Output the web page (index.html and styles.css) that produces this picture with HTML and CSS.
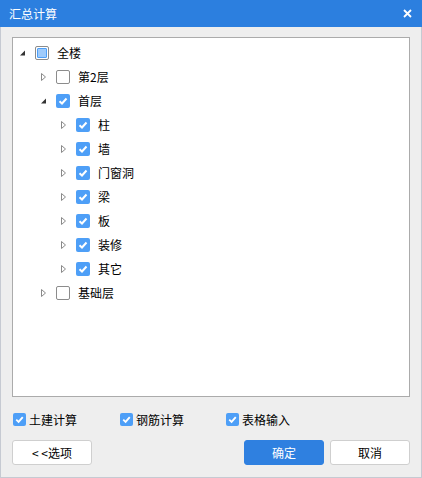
FILE: index.html
```html
<!DOCTYPE html>
<html>
<head>
<meta charset="utf-8">
<link rel="stylesheet" href="styles.css">
</head>
<body>
<div class="window">
  <div class="titlebar">
    <span class="title">汇总计算</span>
    <svg class="close" width="9" height="9" viewBox="0 0 9 9"><path d="M1 1L8 8M8 1L1 8" stroke="#fff" stroke-width="1.8"/></svg>
  </div>
  <div class="body">
    <div class="tree">
      <div class="row l0"><span class="tog"><svg width="8" height="10" viewBox="0 0 8 10"><polygon points="6,2.5 6,7.5 1,7.5" fill="#333"/></svg></span><span class="cb partial"><span></span></span><span class="lbl">全楼</span></div>
      <div class="row l1"><span class="tog"><svg width="8" height="10" viewBox="0 0 8 10"><polygon points="1.5,1.5 5.5,5 1.5,8.5" fill="#fff" stroke="#8a8a8a"/></svg></span><span class="cb"></span><span class="lbl">第2层</span></div>
      <div class="row l1"><span class="tog"><svg width="8" height="10" viewBox="0 0 8 10"><polygon points="6,2.5 6,7.5 1,7.5" fill="#333"/></svg></span><span class="cb on"><svg width="14" height="14" viewBox="0 0 14 14"><path d="M3.5 7.2L6 9.5L10.5 4.5" fill="none" stroke="#fff" stroke-width="2"/></svg></span><span class="lbl">首层</span></div>
      <div class="row l2"><span class="tog"><svg width="8" height="10" viewBox="0 0 8 10"><polygon points="1.5,1.5 5.5,5 1.5,8.5" fill="#fff" stroke="#8a8a8a"/></svg></span><span class="cb on"><svg width="14" height="14" viewBox="0 0 14 14"><path d="M3.5 7.2L6 9.5L10.5 4.5" fill="none" stroke="#fff" stroke-width="2"/></svg></span><span class="lbl">柱</span></div>
      <div class="row l2"><span class="tog"><svg width="8" height="10" viewBox="0 0 8 10"><polygon points="1.5,1.5 5.5,5 1.5,8.5" fill="#fff" stroke="#8a8a8a"/></svg></span><span class="cb on"><svg width="14" height="14" viewBox="0 0 14 14"><path d="M3.5 7.2L6 9.5L10.5 4.5" fill="none" stroke="#fff" stroke-width="2"/></svg></span><span class="lbl">墙</span></div>
      <div class="row l2"><span class="tog"><svg width="8" height="10" viewBox="0 0 8 10"><polygon points="1.5,1.5 5.5,5 1.5,8.5" fill="#fff" stroke="#8a8a8a"/></svg></span><span class="cb on"><svg width="14" height="14" viewBox="0 0 14 14"><path d="M3.5 7.2L6 9.5L10.5 4.5" fill="none" stroke="#fff" stroke-width="2"/></svg></span><span class="lbl">门窗洞</span></div>
      <div class="row l2"><span class="tog"><svg width="8" height="10" viewBox="0 0 8 10"><polygon points="1.5,1.5 5.5,5 1.5,8.5" fill="#fff" stroke="#8a8a8a"/></svg></span><span class="cb on"><svg width="14" height="14" viewBox="0 0 14 14"><path d="M3.5 7.2L6 9.5L10.5 4.5" fill="none" stroke="#fff" stroke-width="2"/></svg></span><span class="lbl">梁</span></div>
      <div class="row l2"><span class="tog"><svg width="8" height="10" viewBox="0 0 8 10"><polygon points="1.5,1.5 5.5,5 1.5,8.5" fill="#fff" stroke="#8a8a8a"/></svg></span><span class="cb on"><svg width="14" height="14" viewBox="0 0 14 14"><path d="M3.5 7.2L6 9.5L10.5 4.5" fill="none" stroke="#fff" stroke-width="2"/></svg></span><span class="lbl">板</span></div>
      <div class="row l2"><span class="tog"><svg width="8" height="10" viewBox="0 0 8 10"><polygon points="1.5,1.5 5.5,5 1.5,8.5" fill="#fff" stroke="#8a8a8a"/></svg></span><span class="cb on"><svg width="14" height="14" viewBox="0 0 14 14"><path d="M3.5 7.2L6 9.5L10.5 4.5" fill="none" stroke="#fff" stroke-width="2"/></svg></span><span class="lbl">装修</span></div>
      <div class="row l2"><span class="tog"><svg width="8" height="10" viewBox="0 0 8 10"><polygon points="1.5,1.5 5.5,5 1.5,8.5" fill="#fff" stroke="#8a8a8a"/></svg></span><span class="cb on"><svg width="14" height="14" viewBox="0 0 14 14"><path d="M3.5 7.2L6 9.5L10.5 4.5" fill="none" stroke="#fff" stroke-width="2"/></svg></span><span class="lbl">其它</span></div>
      <div class="row l1"><span class="tog"><svg width="8" height="10" viewBox="0 0 8 10"><polygon points="1.5,1.5 5.5,5 1.5,8.5" fill="#fff" stroke="#8a8a8a"/></svg></span><span class="cb"></span><span class="lbl">基础层</span></div>
    </div>
    <div class="opts">
      <label class="opt w1"><span class="cb on sm"><svg width="13" height="13" viewBox="0 0 14 14"><path d="M3.5 7.2L6 9.5L10.5 4.5" fill="none" stroke="#fff" stroke-width="2"/></svg></span><span>土建计算</span></label>
      <label class="opt w2"><span class="cb on sm"><svg width="13" height="13" viewBox="0 0 14 14"><path d="M3.5 7.2L6 9.5L10.5 4.5" fill="none" stroke="#fff" stroke-width="2"/></svg></span><span>钢筋计算</span></label>
      <label class="opt"><span class="cb on sm"><svg width="13" height="13" viewBox="0 0 14 14"><path d="M3.5 7.2L6 9.5L10.5 4.5" fill="none" stroke="#fff" stroke-width="2"/></svg></span><span>表格输入</span></label>
    </div>
    <div class="buttons">
      <button class="btn">&lt; &lt;选项</button>
      <span class="spacer"></span>
      <button class="btn primary">确定</button>
      <button class="btn">取消</button>
    </div>
  </div>
</div>
</body>
</html>
```
FILE: styles.css
```css
* { box-sizing: border-box; }
html, body { margin: 0; padding: 0; }
body {
  font-family: "Noto Sans CJK SC", "Noto Sans", sans-serif;
  font-size: 12px;
  color: #000;
  background: #eeeeee;
}
.window {
  width: 422px;
  height: 478px;
  display: flex;
  flex-direction: column;
}
.titlebar {
  height: 27px;
  background: #2c7fdf;
  display: flex;
  align-items: center;
  justify-content: space-between;
  padding: 0 10px 0 9px;
  color: #fff;
}
.title { font-size: 12px; line-height: 27px; }
.close { display: block; margin-top: -1px; }
.body {
  flex: 1;
  background: #eeeeee;
  border: 1px solid #c6cad2;
  border-top: none;
  padding: 10px 11px 0 11px;
  display: flex;
  flex-direction: column;
}
.tree {
  height: 360px;
  background: #fff;
  border: 1px solid #ababab;
  padding-top: 3px;
}
.row {
  height: 24px;
  display: flex;
  align-items: center;
}
.row.l0 { padding-left: 6px; }
.row.l1 { padding-left: 27px; }
.row.l2 { padding-left: 47px; }
.tog {
  width: 16px;
  height: 24px;
  display: flex;
  align-items: center;
}
.tog svg { display: block; }
.cb {
  width: 14px;
  height: 14px;
  border: 1px solid #8c8c8c;
  border-radius: 2px;
  background: #fff;
  flex: none;
  display: flex;
  align-items: center;
  justify-content: center;
}
.cb svg { display: block; }
.cb.on {
  background: #4e9ff7;
  border: none;
}
.cb.partial span {
  width: 10px;
  height: 10px;
  background: #9fcbfb;
  border: 1px solid #4e9ff7;
  border-radius: 1px;
}
.cb.sm { width: 13px; height: 13px; }
.lbl { margin-left: 8px; line-height: 24px; }
.opts {
  display: flex;
  align-items: center;
  margin-top: 16px;
  height: 13px;
  padding-left: 1px;
}
.opt {
  display: flex;
  align-items: center;
  gap: 3px;
  line-height: 13px;
}
.opt.w1 { width: 107px; }
.opt.w2 { width: 106px; }
.buttons {
  display: flex;
  margin-top: 14px;
  gap: 6px;
}
.spacer { flex: 1; }
.btn {
  width: 80px;
  height: 25px;
  background: #fff;
  border: 1px solid #cfcfcf;
  border-radius: 3px;
  font-family: "Noto Sans CJK SC", "Noto Sans", sans-serif;
  font-size: 12px;
  color: #000;
  padding: 0;
}
.btn.primary {
  background: #2f80e0;
  border-color: #2f80e0;
  color: #fff;
}
```
